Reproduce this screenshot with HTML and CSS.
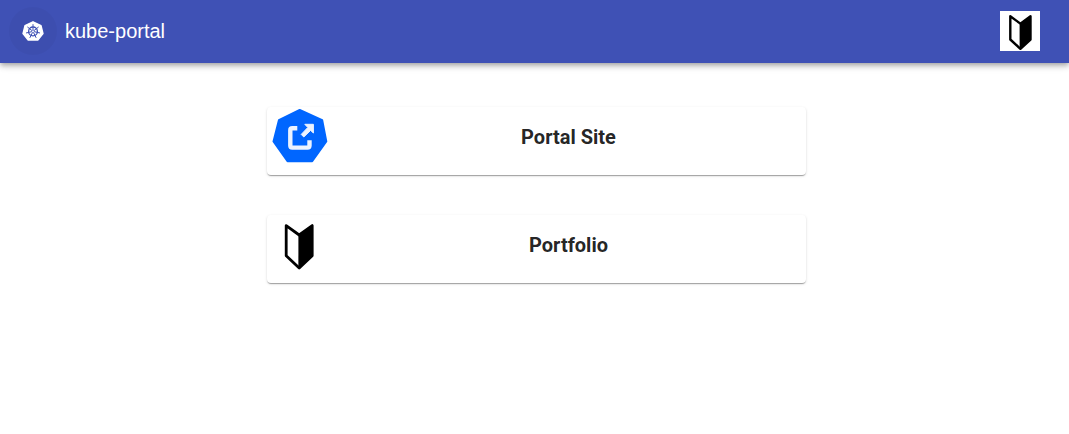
FILE: index.html
```html
<!DOCTYPE html>
<html lang="en">
<head>
<meta charset="utf-8">
<meta name="viewport" content="width=device-width, initial-scale=1">
<title>kube-portal</title>
<link rel="stylesheet" href="styles.css">
</head>
<body>
<header class="app-bar">
  <button class="icon-button" type="button" aria-label="Home">
    <svg class="logo" viewBox="0 0 24 24" aria-hidden="true">
      <path d="M12 2.8 20 6.6 22 14.6 16.8 21.1H7.2L2 14.6 4 6.6Z" fill="#fff" stroke="#fff" stroke-width="1.4" stroke-linejoin="round"/>
      <g fill="none" stroke="#3f51b5" stroke-linecap="round">
        <circle cx="12" cy="12.4" r="4.4" stroke-width="1.3"/>
        <path stroke-width="1" d="M12 12.4V5.6M12 12.4 17.3 8.2M12 12.4 18.6 13.9M12 12.4 15 18.5M12 12.4 9 18.5M12 12.4 5.4 13.9M12 12.4 6.7 8.2"/>
      </g>
      <circle cx="12" cy="12.4" r="1" fill="#fff"/>
    </svg>
  </button>
  <h1 class="app-title">kube-portal</h1>
  <svg class="avatar" viewBox="0 0 40 40" role="img" aria-label="User">
    <path d="M10.3 5.3 20.4 12.6 30.5 5.3V28.5L20.4 37.8 10.3 28.5Z" fill="#fff" stroke="#000" stroke-width="2.4" stroke-linejoin="round"/>
    <path d="M19.6 12.6 30.5 5.3V28.5L19.6 37.8Z"/>
  </svg>
</header>
<main class="links">
  <a class="card" href="#portal-site">
    <svg class="card-icon" viewBox="0 0 64 64" aria-hidden="true">
      <path d="M32.7 3 55.2 13.2 59.3 34.5 45.2 54.2H20.5L6.5 34.5 11.9 13.2Z" fill="#06f" stroke="#06f" stroke-width="2" stroke-linejoin="round"/>
      <path d="M30.3 21.3H25.3Q23.3 21.3 23.3 23.3V38.6Q23.3 40.6 25.3 40.6H40.5Q42.5 40.6 42.5 38.6V33.3" fill="none" stroke="#ebf3ff" stroke-width="4.4"/>
      <path d="M37.8 17.3H46.4V26L43.6 23.4 36.8 30 34.2 27.4 40.8 20.5Z" fill="#ebf3ff" stroke="#ebf3ff" stroke-linejoin="round"/>
    </svg>
    <h2 class="card-title">Portal Site</h2>
  </a>
  <a class="card" href="#portfolio">
    <svg class="card-icon" viewBox="0 0 64 64" aria-hidden="true">
      <path d="M19.2 10.6 32.2 20 45.2 10.6V40.8L32.2 53 19.2 40.8Z" fill="#fff" stroke="#000" stroke-width="2.8" stroke-linejoin="round"/>
      <path d="M31.4 20 45.2 10.6V40.8L31.4 53Z"/>
    </svg>
    <h2 class="card-title">Portfolio</h2>
  </a>
</main>
</body>
</html>
```
FILE: styles.css
```css
* {
  box-sizing: border-box;
}

body {
  margin: 0;
  background: #fff;
  color: rgba(0, 0, 0, 0.87);
  font-family: "Liberation Sans", Arial, sans-serif;
}

.app-bar {
  display: flex;
  align-items: center;
  min-height: 63px;
  padding: 0 29px 1px 9px;
  background: #3f51b5;
  color: #fff;
  box-shadow: 0 2px 4px -1px rgba(0, 0, 0, 0.2), 0 4px 5px rgba(0, 0, 0, 0.14), 0 1px 10px rgba(0, 0, 0, 0.12);
}

.icon-button {
  display: flex;
  padding: 12px;
  border: 0;
  border-radius: 50%;
  background: rgba(0, 0, 0, 0.03);
  cursor: pointer;
}

.logo {
  width: 24px;
  height: 24px;
}

.app-title {
  flex: 1;
  margin: 0 0 0 8px;
  font-size: 20px;
  font-weight: 400;
  line-height: 30px;
}

.avatar {
  width: 40px;
  height: 40px;
  background: #fff;
}

.links {
  display: flex;
  flex-direction: column;
  align-items: center;
  gap: 40px;
  padding: 44px 16px 44px 20px;
}

.card {
  display: flex;
  width: 100%;
  max-width: 539px;
  min-height: 68px;
  border-radius: 4px;
  background: #fff;
  color: inherit;
  text-decoration: none;
  box-shadow: 0 2px 1px -1px rgba(0, 0, 0, 0.2), 0 1px 1px rgba(0, 0, 0, 0.14), 0 1px 3px rgba(0, 0, 0, 0.12);
}

.card-icon {
  flex: none;
  width: 64px;
  height: 64px;
}

.card-title {
  flex: 1;
  margin: 14px 0 0;
  font-family: Roboto, sans-serif;
  font-size: 20px;
  font-weight: 700;
  line-height: 32px;
  text-align: center;
}
```
